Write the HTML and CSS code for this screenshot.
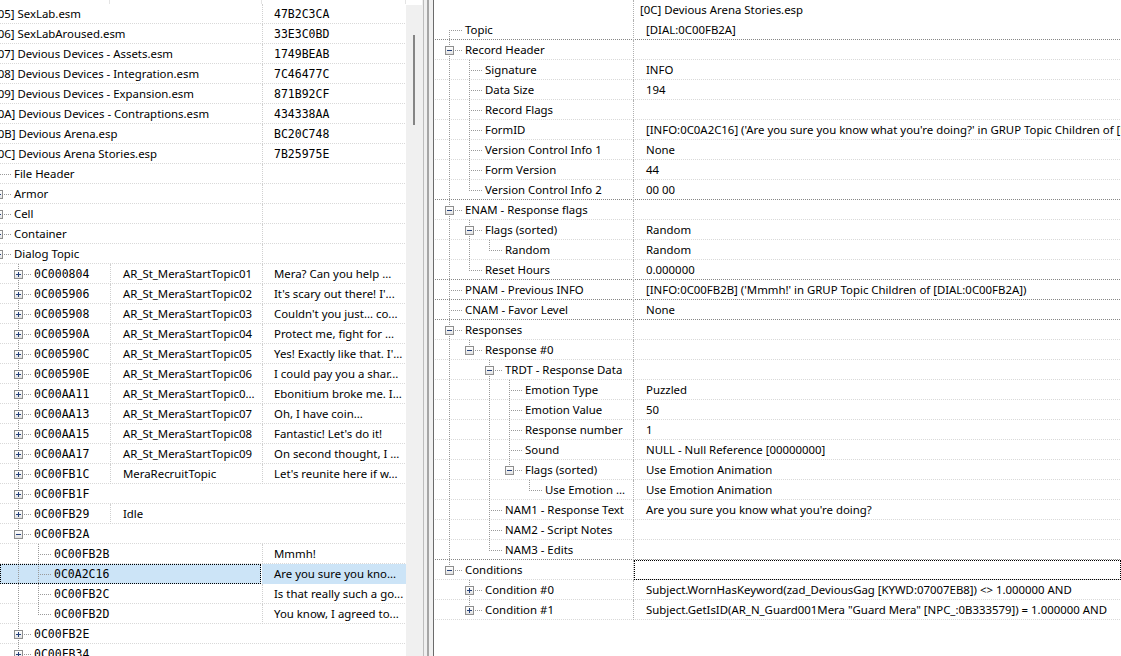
FILE: index.html
```html
<!DOCTYPE html>
<html>
<head>
<meta charset="utf-8">
<title>xEdit</title>
<link rel="stylesheet" href="styles.css">
</head>
<body>
<div class="app">
  <div class="left">
    <div class="lhead"><span></span><span></span><span></span></div>

    <div class="lrow"><div class="tc m"><i class="c t"></i><span class="tx">[05] SexLab.esm</span></div><div class="cc mn">47B2C3CA</div></div>
    <div class="lrow"><div class="tc m"><i class="c t"></i><span class="tx">[06] SexLabAroused.esm</span></div><div class="cc mn">33E3C0BD</div></div>
    <div class="lrow"><div class="tc m"><i class="c t"></i><span class="tx">[07] Devious Devices - Assets.esm</span></div><div class="cc mn">1749BEAB</div></div>
    <div class="lrow"><div class="tc m"><i class="c t"></i><span class="tx">[08] Devious Devices - Integration.esm</span></div><div class="cc mn">7C46477C</div></div>
    <div class="lrow"><div class="tc m"><i class="c t"></i><span class="tx">[09] Devious Devices - Expansion.esm</span></div><div class="cc mn">871B92CF</div></div>
    <div class="lrow"><div class="tc m"><i class="c t"></i><span class="tx">[0A] Devious Devices - Contraptions.esm</span></div><div class="cc mn">434338AA</div></div>
    <div class="lrow"><div class="tc m"><i class="c t"></i><span class="tx">[0B] Devious Arena.esp</span></div><div class="cc mn">BC20C748</div></div>
    <div class="lrow"><div class="tc m"><i class="c l"><b class="bx"></b></i><span class="tx">[0C] Devious Arena Stories.esp</span></div><div class="cc mn">7B25975E</div></div>

    <div class="lrow"><div class="tc m"><i class="g"></i><i class="c t"></i><span class="tx">File Header</span></div><div class="cc"></div></div>
    <div class="lrow"><div class="tc m"><i class="g"></i><i class="c t"><b class="bx p"></b></i><span class="tx">Armor</span></div><div class="cc"></div></div>
    <div class="lrow"><div class="tc m"><i class="g"></i><i class="c t"><b class="bx p"></b></i><span class="tx">Cell</span></div><div class="cc"></div></div>
    <div class="lrow"><div class="tc m"><i class="g"></i><i class="c t"><b class="bx p"></b></i><span class="tx">Container</span></div><div class="cc"></div></div>
    <div class="lrow"><div class="tc m"><i class="g"></i><i class="c t"><b class="bx"></b></i><span class="tx">Dialog Topic</span></div><div class="cc"></div></div>

    <div class="lrow"><div class="tc"><i class="g"></i><i class="g"></i><i class="c t"><b class="bx p"></b></i><span class="tx mn">0C000804</span></div><div class="ec">AR_St_MeraStartTopic01</div><div class="cc">Mera? Can you help ...</div></div>
    <div class="lrow"><div class="tc"><i class="g"></i><i class="g"></i><i class="c t"><b class="bx p"></b></i><span class="tx mn">0C005906</span></div><div class="ec">AR_St_MeraStartTopic02</div><div class="cc">It's scary out there! I'...</div></div>
    <div class="lrow"><div class="tc"><i class="g"></i><i class="g"></i><i class="c t"><b class="bx p"></b></i><span class="tx mn">0C005908</span></div><div class="ec">AR_St_MeraStartTopic03</div><div class="cc">Couldn't you just... co...</div></div>
    <div class="lrow"><div class="tc"><i class="g"></i><i class="g"></i><i class="c t"><b class="bx p"></b></i><span class="tx mn">0C00590A</span></div><div class="ec">AR_St_MeraStartTopic04</div><div class="cc">Protect me, fight for ...</div></div>
    <div class="lrow"><div class="tc"><i class="g"></i><i class="g"></i><i class="c t"><b class="bx p"></b></i><span class="tx mn">0C00590C</span></div><div class="ec">AR_St_MeraStartTopic05</div><div class="cc">Yes! Exactly like that. I'...</div></div>
    <div class="lrow"><div class="tc"><i class="g"></i><i class="g"></i><i class="c t"><b class="bx p"></b></i><span class="tx mn">0C00590E</span></div><div class="ec">AR_St_MeraStartTopic06</div><div class="cc">I could pay you a shar...</div></div>
    <div class="lrow"><div class="tc"><i class="g"></i><i class="g"></i><i class="c t"><b class="bx p"></b></i><span class="tx mn">0C00AA11</span></div><div class="ec">AR_St_MeraStartTopic0...</div><div class="cc">Ebonitium broke me. I...</div></div>
    <div class="lrow"><div class="tc"><i class="g"></i><i class="g"></i><i class="c t"><b class="bx p"></b></i><span class="tx mn">0C00AA13</span></div><div class="ec">AR_St_MeraStartTopic07</div><div class="cc">Oh, I have coin...</div></div>
    <div class="lrow"><div class="tc"><i class="g"></i><i class="g"></i><i class="c t"><b class="bx p"></b></i><span class="tx mn">0C00AA15</span></div><div class="ec">AR_St_MeraStartTopic08</div><div class="cc">Fantastic! Let's do it!</div></div>
    <div class="lrow"><div class="tc"><i class="g"></i><i class="g"></i><i class="c t"><b class="bx p"></b></i><span class="tx mn">0C00AA17</span></div><div class="ec">AR_St_MeraStartTopic09</div><div class="cc">On second thought, I ...</div></div>
    <div class="lrow"><div class="tc"><i class="g"></i><i class="g"></i><i class="c t"><b class="bx p"></b></i><span class="tx mn">0C00FB1C</span></div><div class="ec">MeraRecruitTopic</div><div class="cc">Let's reunite here if w...</div></div>
    <div class="lrow"><div class="tc"><i class="g"></i><i class="g"></i><i class="c t"><b class="bx p"></b></i><span class="tx mn">0C00FB1F</span></div><div class="ec x"></div><div class="cc x"></div></div>
    <div class="lrow"><div class="tc"><i class="g"></i><i class="g"></i><i class="c t"><b class="bx p"></b></i><span class="tx mn">0C00FB29</span></div><div class="ec">Idle</div><div class="cc x"></div></div>
    <div class="lrow"><div class="tc"><i class="g"></i><i class="g"></i><i class="c t"><b class="bx"></b></i><span class="tx mn">0C00FB2A</span></div><div class="ec x"></div><div class="cc x"></div></div>

    <div class="lrow"><div class="tc m"><i class="g"></i><i class="g"></i><i class="g v"></i><i class="c t"></i><span class="tx mn">0C00FB2B</span></div><div class="cc">Mmmh!</div></div>
    <div class="lrow"><div class="tc m focus"><i class="g"></i><i class="g"></i><i class="g v"></i><i class="c t"></i><span class="tx mn">0C0A2C16</span></div><div class="cc sel">Are you sure you kno...</div></div>
    <div class="lrow"><div class="tc m"><i class="g"></i><i class="g"></i><i class="g v"></i><i class="c t"></i><span class="tx mn">0C00FB2C</span></div><div class="cc">Is that really such a go...</div></div>
    <div class="lrow"><div class="tc m"><i class="g"></i><i class="g"></i><i class="g v"></i><i class="c l"></i><span class="tx mn">0C00FB2D</span></div><div class="cc">You know, I agreed to...</div></div>

    <div class="lrow"><div class="tc"><i class="g"></i><i class="g"></i><i class="c t"><b class="bx p"></b></i><span class="tx mn">0C00FB2E</span></div><div class="ec x"></div><div class="cc x"></div></div>
    <div class="lrow"><div class="tc"><i class="g"></i><i class="g"></i><i class="c t"><b class="bx p"></b></i><span class="tx mn">0C00FB34</span></div><div class="ec x"></div><div class="cc x"></div></div>
  </div>

  <div class="vscroll"><div class="thumb"></div></div>
  <div class="split"></div>

  <div class="right">
    <div class="rrow rh"><div class="lab"></div><div class="val hv">[0C] Devious Arena Stories.esp</div></div>
    <div class="rrow dk"><div class="lab"><i class="c f"></i><span class="tx">Topic</span></div><div class="val">[DIAL:0C00FB2A]</div></div>
    <div class="rrow"><div class="lab"><i class="c t"><b class="bx"></b></i><span class="tx">Record Header</span></div><div class="val"></div></div>
    <div class="rrow"><div class="lab"><i class="g v"></i><i class="c t"></i><span class="tx">Signature</span></div><div class="val">INFO</div></div>
    <div class="rrow"><div class="lab"><i class="g v"></i><i class="c t"></i><span class="tx">Data Size</span></div><div class="val">194</div></div>
    <div class="rrow"><div class="lab"><i class="g v"></i><i class="c t"></i><span class="tx">Record Flags</span></div><div class="val"></div></div>
    <div class="rrow"><div class="lab"><i class="g v"></i><i class="c t"></i><span class="tx">FormID</span></div><div class="val">[INFO:0C0A2C16] ('Are you sure you know what you're doing?' in GRUP Topic Children of [DIAL:0C00FB2A])</div></div>
    <div class="rrow"><div class="lab"><i class="g v"></i><i class="c t"></i><span class="tx">Version Control Info 1</span></div><div class="val">None</div></div>
    <div class="rrow"><div class="lab"><i class="g v"></i><i class="c t"></i><span class="tx">Form Version</span></div><div class="val">44</div></div>
    <div class="rrow dk"><div class="lab"><i class="g v"></i><i class="c l"></i><span class="tx">Version Control Info 2</span></div><div class="val">00 00</div></div>
    <div class="rrow"><div class="lab"><i class="c t"><b class="bx"></b></i><span class="tx">ENAM - Response flags</span></div><div class="val"></div></div>
    <div class="rrow"><div class="lab"><i class="g v"></i><i class="c t"><b class="bx"></b></i><span class="tx">Flags (sorted)</span></div><div class="val">Random</div></div>
    <div class="rrow"><div class="lab"><i class="g v"></i><i class="g v"></i><i class="c l"></i><span class="tx">Random</span></div><div class="val">Random</div></div>
    <div class="rrow dk"><div class="lab"><i class="g v"></i><i class="c l"></i><span class="tx">Reset Hours</span></div><div class="val">0.000000</div></div>
    <div class="rrow dk"><div class="lab"><i class="c t"></i><span class="tx">PNAM - Previous INFO</span></div><div class="val">[INFO:0C00FB2B] ('Mmmh!' in GRUP Topic Children of [DIAL:0C00FB2A])</div></div>
    <div class="rrow dk"><div class="lab"><i class="c t"></i><span class="tx">CNAM - Favor Level</span></div><div class="val">None</div></div>
    <div class="rrow"><div class="lab"><i class="c t"><b class="bx"></b></i><span class="tx">Responses</span></div><div class="val"></div></div>
    <div class="rrow"><div class="lab"><i class="g v"></i><i class="c l"><b class="bx"></b></i><span class="tx">Response #0</span></div><div class="val"></div></div>
    <div class="rrow"><div class="lab"><i class="g v"></i><i class="g"></i><i class="c t"><b class="bx"></b></i><span class="tx">TRDT - Response Data</span></div><div class="val"></div></div>
    <div class="rrow"><div class="lab"><i class="g v"></i><i class="g"></i><i class="g v"></i><i class="c t"></i><span class="tx">Emotion Type</span></div><div class="val">Puzzled</div></div>
    <div class="rrow"><div class="lab"><i class="g v"></i><i class="g"></i><i class="g v"></i><i class="c t"></i><span class="tx">Emotion Value</span></div><div class="val">50</div></div>
    <div class="rrow"><div class="lab"><i class="g v"></i><i class="g"></i><i class="g v"></i><i class="c t"></i><span class="tx">Response number</span></div><div class="val">1</div></div>
    <div class="rrow"><div class="lab"><i class="g v"></i><i class="g"></i><i class="g v"></i><i class="c t"></i><span class="tx">Sound</span></div><div class="val">NULL - Null Reference [00000000]</div></div>
    <div class="rrow"><div class="lab"><i class="g v"></i><i class="g"></i><i class="g v"></i><i class="c l"><b class="bx"></b></i><span class="tx">Flags (sorted)</span></div><div class="val">Use Emotion Animation</div></div>
    <div class="rrow"><div class="lab"><i class="g v"></i><i class="g"></i><i class="g v"></i><i class="g"></i><i class="c l"></i><span class="tx">Use Emotion ...</span></div><div class="val">Use Emotion Animation</div></div>
    <div class="rrow"><div class="lab"><i class="g v"></i><i class="g"></i><i class="c t"></i><span class="tx">NAM1 - Response Text</span></div><div class="val">Are you sure you know what you're doing?</div></div>
    <div class="rrow"><div class="lab"><i class="g v"></i><i class="g"></i><i class="c t"></i><span class="tx">NAM2 - Script Notes</span></div><div class="val"></div></div>
    <div class="rrow dk"><div class="lab"><i class="g v"></i><i class="g"></i><i class="c l"></i><span class="tx">NAM3 - Edits</span></div><div class="val"></div></div>
    <div class="rrow"><div class="lab"><i class="c l"><b class="bx"></b></i><span class="tx">Conditions</span></div><div class="val focus"></div></div>
    <div class="rrow"><div class="lab"><i class="g"></i><i class="c t"><b class="bx p"></b></i><span class="tx">Condition #0</span></div><div class="val">Subject.WornHasKeyword(zad_DeviousGag [KYWD:07007EB8]) &lt;&gt; 1.000000 AND</div></div>
    <div class="rrow"><div class="lab"><i class="g"></i><i class="c l"><b class="bx p"></b></i><span class="tx">Condition #1</span></div><div class="val">Subject.GetIsID(AR_N_Guard001Mera "Guard Mera" [NPC_:0B333579]) = 1.000000 AND</div></div>
  </div>
</div>
</body>
</html>
```

FILE: styles.css
```css
:root {
  --tl: #9a9a9a;
  --H: repeating-linear-gradient(90deg, var(--tl) 0 1px, transparent 1px 2px) 10px 10px / 13px 1px no-repeat;
  --V: repeating-linear-gradient(180deg, var(--tl) 0 1px, transparent 1px 2px) 10px 0 / 1px 20px no-repeat;
  --Vt: repeating-linear-gradient(180deg, var(--tl) 0 1px, transparent 1px 2px) 10px 0 / 1px 10px no-repeat;
  --Vb: repeating-linear-gradient(180deg, var(--tl) 0 1px, transparent 1px 2px) 10px 10px / 1px 10px no-repeat;
  --rl: repeating-linear-gradient(90deg, #d9d9d9 0 1px, transparent 1px 2px) 0 19px / 100% 1px no-repeat;
  --rd: repeating-linear-gradient(90deg, #888888 0 1px, transparent 1px 2px) 0 19px / 100% 1px no-repeat;
  --minus: linear-gradient(#24407a, #24407a) center / 5px 1px no-repeat;
  --plusv: linear-gradient(#24407a, #24407a) center / 1px 5px no-repeat;
  --boxbg: linear-gradient(#ffffff, #e2e2e2);
}

* { box-sizing: border-box; }

html, body {
  margin: 0;
  background: #ffffff;
}

body {
  font-family: "Noto Sans", "Liberation Sans", sans-serif;
  font-size: 11.4px;
  color: #000000;
}

.app {
  display: flex;
  width: 1121px;
  height: 656px;
  overflow: hidden;
}

/* ---------- left tree ---------- */
.left {
  flex: 0 0 406px;
  overflow: hidden;
}

.lhead {
  display: grid;
  grid-template-columns: 110px 152px 144px;
  height: 4px;
}
.lhead span { border-right: 1px solid #e4e4e4; }

.lrow {
  display: grid;
  grid-template-columns: 110px 152px 144px;
  height: 20px;
  line-height: 20px;
  background: var(--rl);
}
.lrow > div {
  overflow: hidden;
  white-space: nowrap;
  min-width: 0;
}
.lrow > div + div { border-left: 1px dotted #d0d0d0; }
.lrow > .x { border-left-color: transparent; }

.tc { display: flex; }
.tc.m { grid-column: span 2; }
.tc > :first-child { margin-left: -32px; }

.ec { padding-left: 12px; }
.cc { padding-left: 11px; }

.mn {
  font-family: "DejaVu Sans Mono", "Liberation Mono", monospace;
  font-size: 11.5px;
}

.lrow .focus {
  background: #cce4f7;
  outline: 1px dotted #000000;
  outline-offset: -1px;
  margin-right: 1px;
}
.lrow .sel {
  background: #cce4f7;
  border-left-color: transparent;
}

/* ---------- tree guides ---------- */
.g {
  display: block;
  flex: 0 0 20px;
  height: 20px;
}
.g.v { background: var(--V); }

.c {
  display: block;
  flex: 0 0 23px;
  height: 20px;
}
.c.t { background: var(--H), var(--V); }
.c.l { background: var(--H), var(--Vt); }
.c.f { background: var(--H), var(--Vb); }

.bx {
  display: block;
  width: 9px;
  height: 9px;
  margin: 6px 0 0 6px;
  border: 1px solid #8e8e8e;
  background: var(--minus), var(--boxbg);
}
.bx.p { background: var(--minus), var(--plusv), var(--boxbg); }

.tx {
  margin-left: 3px;
  white-space: nowrap;
}

/* ---------- scrollbar / splitter ---------- */
.vscroll {
  flex: 0 0 16px;
  background: linear-gradient(#ffffff 0 5px, #f0f0f0 5px);
  padding: 35px 0 0 7px;
}
.thumb {
  width: 2px;
  height: 90px;
  background: #858585;
}

.split {
  flex: 0 0 13px;
  background: linear-gradient(90deg,
    #f0f0f0 0 1px, #bdbdbd 1px 2px, #f0f0f0 2px 5px,
    #a6a6a6 5px 7px, #f0f0f0 7px 11px, #6b6b6b 11px 12px, #ffffff 12px);
}

/* ---------- right record view ---------- */
.right {
  flex: 1;
  min-width: 0;
  overflow: hidden;
}

.rrow {
  display: flex;
  height: 20px;
  line-height: 20px;
  background: var(--rl);
}
.rrow.dk { background: var(--rd); }
.rrow.rh { background: none; }

.lab {
  flex: 0 0 199px;
  display: flex;
  padding-left: 4px;
  border-right: 1px dotted #b0b0b0;
  overflow: hidden;
  white-space: nowrap;
}

.val {
  flex: 1;
  min-width: 0;
  padding-left: 12px;
  white-space: nowrap;
  overflow: hidden;
}
.val.hv { padding-left: 6px; }
.val.focus {
  outline: 1px dotted #000000;
  outline-offset: -1px;
}
```
